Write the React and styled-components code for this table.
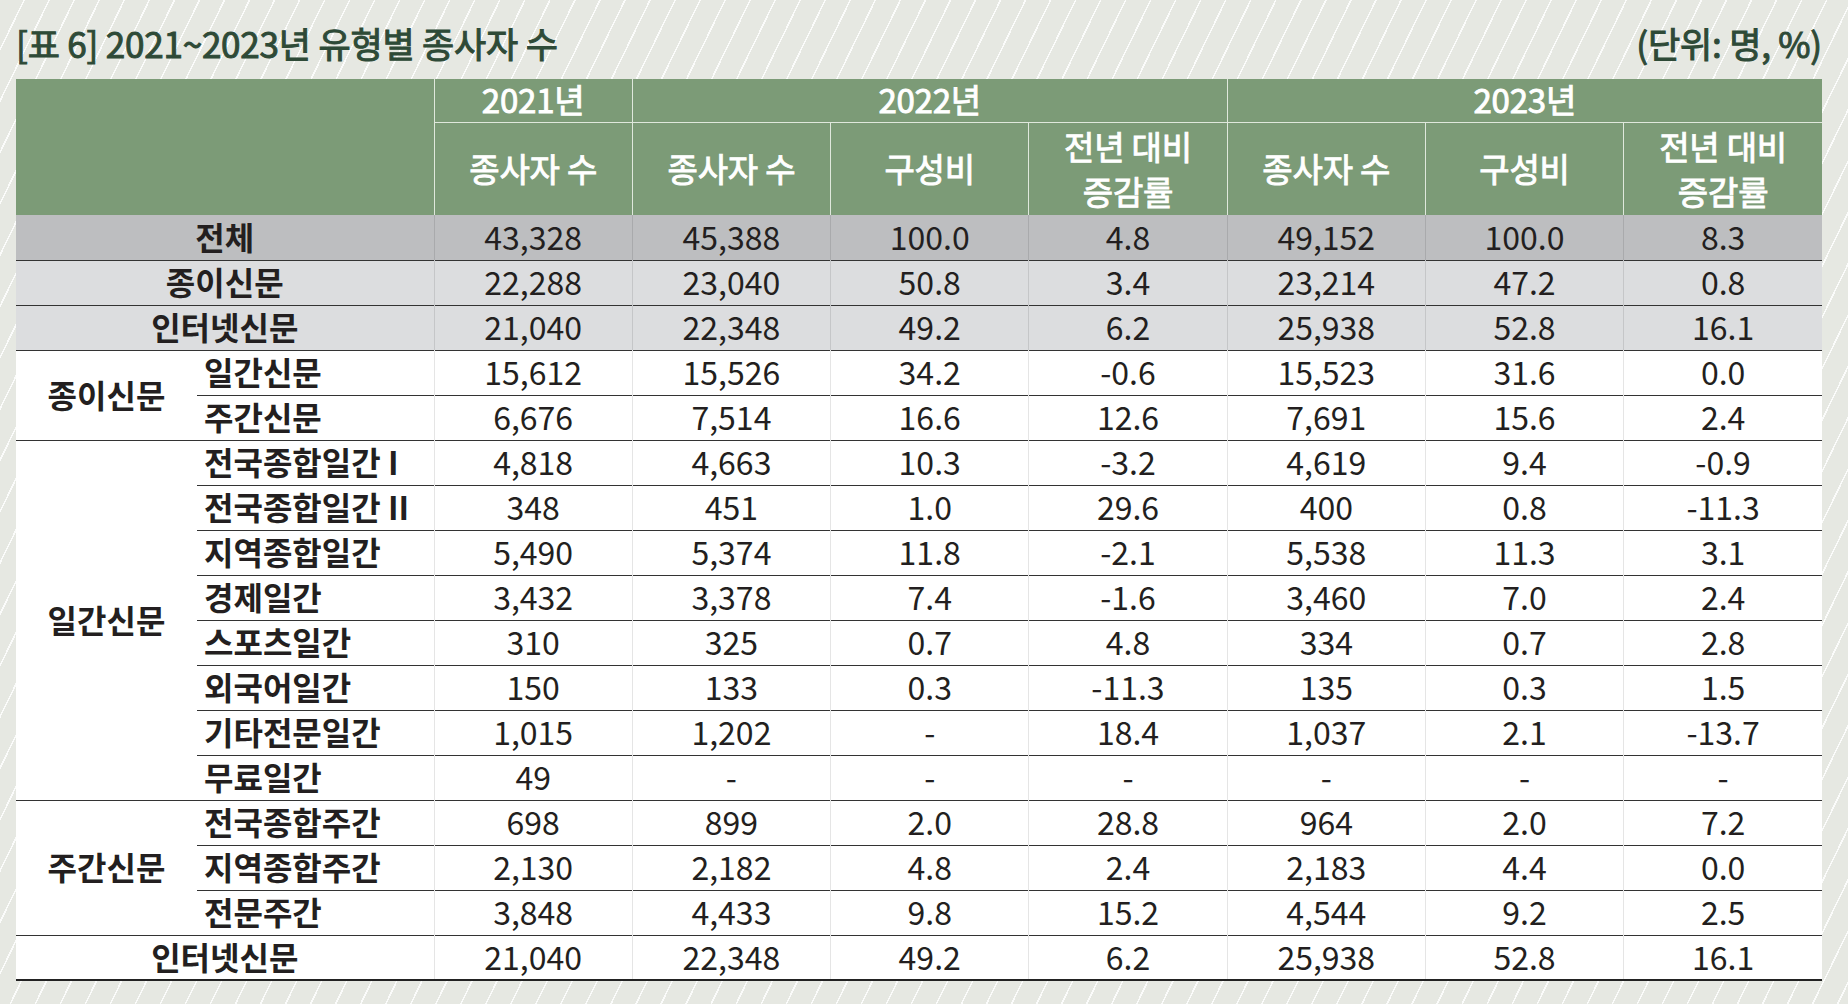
import React from "react";
import styled, { createGlobalStyle } from "styled-components";

const Global = createGlobalStyle`
  html, body { margin: 0; padding: 0; }
  body {
    min-height: 100vh;
    background-color: #e6e8e2;
    background-image: repeating-linear-gradient(
      116deg,
      rgba(255,255,255,0) 0px,
      rgba(255,255,255,0) 21px,
      rgba(255,255,255,0.85) 21px,
      rgba(255,255,255,0.85) 22.5px
    );
    font-family: "Noto Sans CJK KR", "Noto Sans", sans-serif;
    color: #231f20;
  }
`;

const Page = styled.div`
  width: 1848px;
  box-sizing: border-box;
  padding: 0 26px 24px 16px;
`;

const TitleBar = styled.div`
  height: 79px;
  box-sizing: border-box;
  padding-top: 22px;
  display: flex;
  justify-content: space-between;
  align-items: flex-start;
`;

const Title = styled.h1`
  margin: 0;
  font-size: 35px;
  line-height: 1.2;
  font-weight: 400;
  color: #2e4a37;
  -webkit-text-stroke: 1px #2e4a37;
  letter-spacing: -0.2px;
`;

const Unit = styled.span`
  font-size: 35px;
  line-height: 1.2;
  font-weight: 400;
  color: #2e4a37;
  -webkit-text-stroke: 1px #2e4a37;
  letter-spacing: -0.2px;
`;

const Table = styled.table`
  width: 1806px;
  table-layout: fixed;
  border-collapse: collapse;
  border-bottom: 2px solid #222;
  font-size: 32px;
`;

const Th = styled.th`
  background: #7c9b77;
  color: #fff;
  font-weight: 400;
  -webkit-text-stroke: 0.9px #fff;
  font-size: 33px;
  text-align: center;
  vertical-align: middle;
  padding: 0;
  line-height: ${(p) => (p.$two ? "45px" : "1.2")};
  letter-spacing: -0.2px;
  border-left: ${(p) => (p.$first ? "none" : "1px solid #dfe8dc")};
  border-bottom: ${(p) => (p.$top ? "1px solid #dfe8dc" : "none")};
`;

const HeadRow = styled.tr`
  height: ${(p) => p.$h}px;
`;

const ROW_BG = { total: "#bdbec0", sum: "#dcdddf", plain: "#ffffff" };

const BodyRow = styled.tr`
  height: 45px;
  background: ${(p) => ROW_BG[p.$tone]};
`;

const Label = styled.td`
  padding: 0 0 3px ${(p) => (p.$align === "left" ? "7px" : "0")};
  text-align: ${(p) => p.$align || "center"};
  vertical-align: middle;
  font-weight: 700;
  line-height: 1;
  letter-spacing: 0;
  white-space: nowrap;
  border-top: ${(p) => (p.$noTop ? "none" : "1px solid #333")};
`;

const Cell = styled.td`
  padding: 0 0 3px;
  text-align: center;
  vertical-align: middle;
  font-weight: 400;
  line-height: 1;
  letter-spacing: 0;
  border-top: ${(p) => (p.$noTop ? "none" : "1px solid #333")};
  border-left: 1px solid rgba(0, 0, 0, 0.1);
`;

const rows = [
  { tone: "total", label: "전체", v: ["43,328", "45,388", "100.0", "4.8", "49,152", "100.0", "8.3"] },
  { tone: "sum", label: "종이신문", v: ["22,288", "23,040", "50.8", "3.4", "23,214", "47.2", "0.8"] },
  { tone: "sum", label: "인터넷신문", v: ["21,040", "22,348", "49.2", "6.2", "25,938", "52.8", "16.1"] },
  { tone: "plain", group: "종이신문", span: 2, sub: "일간신문", v: ["15,612", "15,526", "34.2", "-0.6", "15,523", "31.6", "0.0"] },
  { tone: "plain", sub: "주간신문", v: ["6,676", "7,514", "16.6", "12.6", "7,691", "15.6", "2.4"] },
  { tone: "plain", group: "일간신문", span: 8, sub: "전국종합일간 I", v: ["4,818", "4,663", "10.3", "-3.2", "4,619", "9.4", "-0.9"] },
  { tone: "plain", sub: "전국종합일간 II", v: ["348", "451", "1.0", "29.6", "400", "0.8", "-11.3"] },
  { tone: "plain", sub: "지역종합일간", v: ["5,490", "5,374", "11.8", "-2.1", "5,538", "11.3", "3.1"] },
  { tone: "plain", sub: "경제일간", v: ["3,432", "3,378", "7.4", "-1.6", "3,460", "7.0", "2.4"] },
  { tone: "plain", sub: "스포츠일간", v: ["310", "325", "0.7", "4.8", "334", "0.7", "2.8"] },
  { tone: "plain", sub: "외국어일간", v: ["150", "133", "0.3", "-11.3", "135", "0.3", "1.5"] },
  { tone: "plain", sub: "기타전문일간", v: ["1,015", "1,202", "-", "18.4", "1,037", "2.1", "-13.7"] },
  { tone: "plain", sub: "무료일간", v: ["49", "-", "-", "-", "-", "-", "-"] },
  { tone: "plain", group: "주간신문", span: 3, sub: "전국종합주간", v: ["698", "899", "2.0", "28.8", "964", "2.0", "7.2"] },
  { tone: "plain", sub: "지역종합주간", v: ["2,130", "2,182", "4.8", "2.4", "2,183", "4.4", "0.0"] },
  { tone: "plain", sub: "전문주간", v: ["3,848", "4,433", "9.8", "15.2", "4,544", "9.2", "2.5"] },
  { tone: "plain", label: "인터넷신문", v: ["21,040", "22,348", "49.2", "6.2", "25,938", "52.8", "16.1"] },
];

export default function App() {
  return (
    <>
      <Global />
      <Page>
        <TitleBar>
          <Title>[표 6] 2021~2023년 유형별 종사자 수</Title>
          <Unit>(단위: 명, %)</Unit>
        </TitleBar>
        <Table>
          <colgroup>
            <col style={{ width: 181 }} />
            <col style={{ width: 237 }} />
            <col />
            <col />
            <col />
            <col />
            <col />
            <col />
            <col />
          </colgroup>
          <thead>
            <HeadRow $h={43}>
              <Th $first colSpan={2} rowSpan={2} />
              <Th $top>2021년</Th>
              <Th $top colSpan={3}>2022년</Th>
              <Th $top colSpan={3}>2023년</Th>
            </HeadRow>
            <HeadRow $h={93}>
              <Th>종사자 수</Th>
              <Th>종사자 수</Th>
              <Th>구성비</Th>
              <Th $two>
                전년 대비
                <br />
                증감률
              </Th>
              <Th>종사자 수</Th>
              <Th>구성비</Th>
              <Th $two>
                전년 대비
                <br />
                증감률
              </Th>
            </HeadRow>
          </thead>
          <tbody>
            {rows.map((r, i) => (
              <BodyRow key={i} $tone={r.tone}>
                {r.label && (
                  <Label colSpan={2} $noTop={i === 0}>
                    {r.label}
                  </Label>
                )}
                {r.group && <Label rowSpan={r.span}>{r.group}</Label>}
                {r.sub && <Label $align="left">{r.sub}</Label>}
                {r.v.map((x, j) => (
                  <Cell key={j} $noTop={i === 0}>
                    {x}
                  </Cell>
                ))}
              </BodyRow>
            ))}
          </tbody>
        </Table>
      </Page>
    </>
  );
}
